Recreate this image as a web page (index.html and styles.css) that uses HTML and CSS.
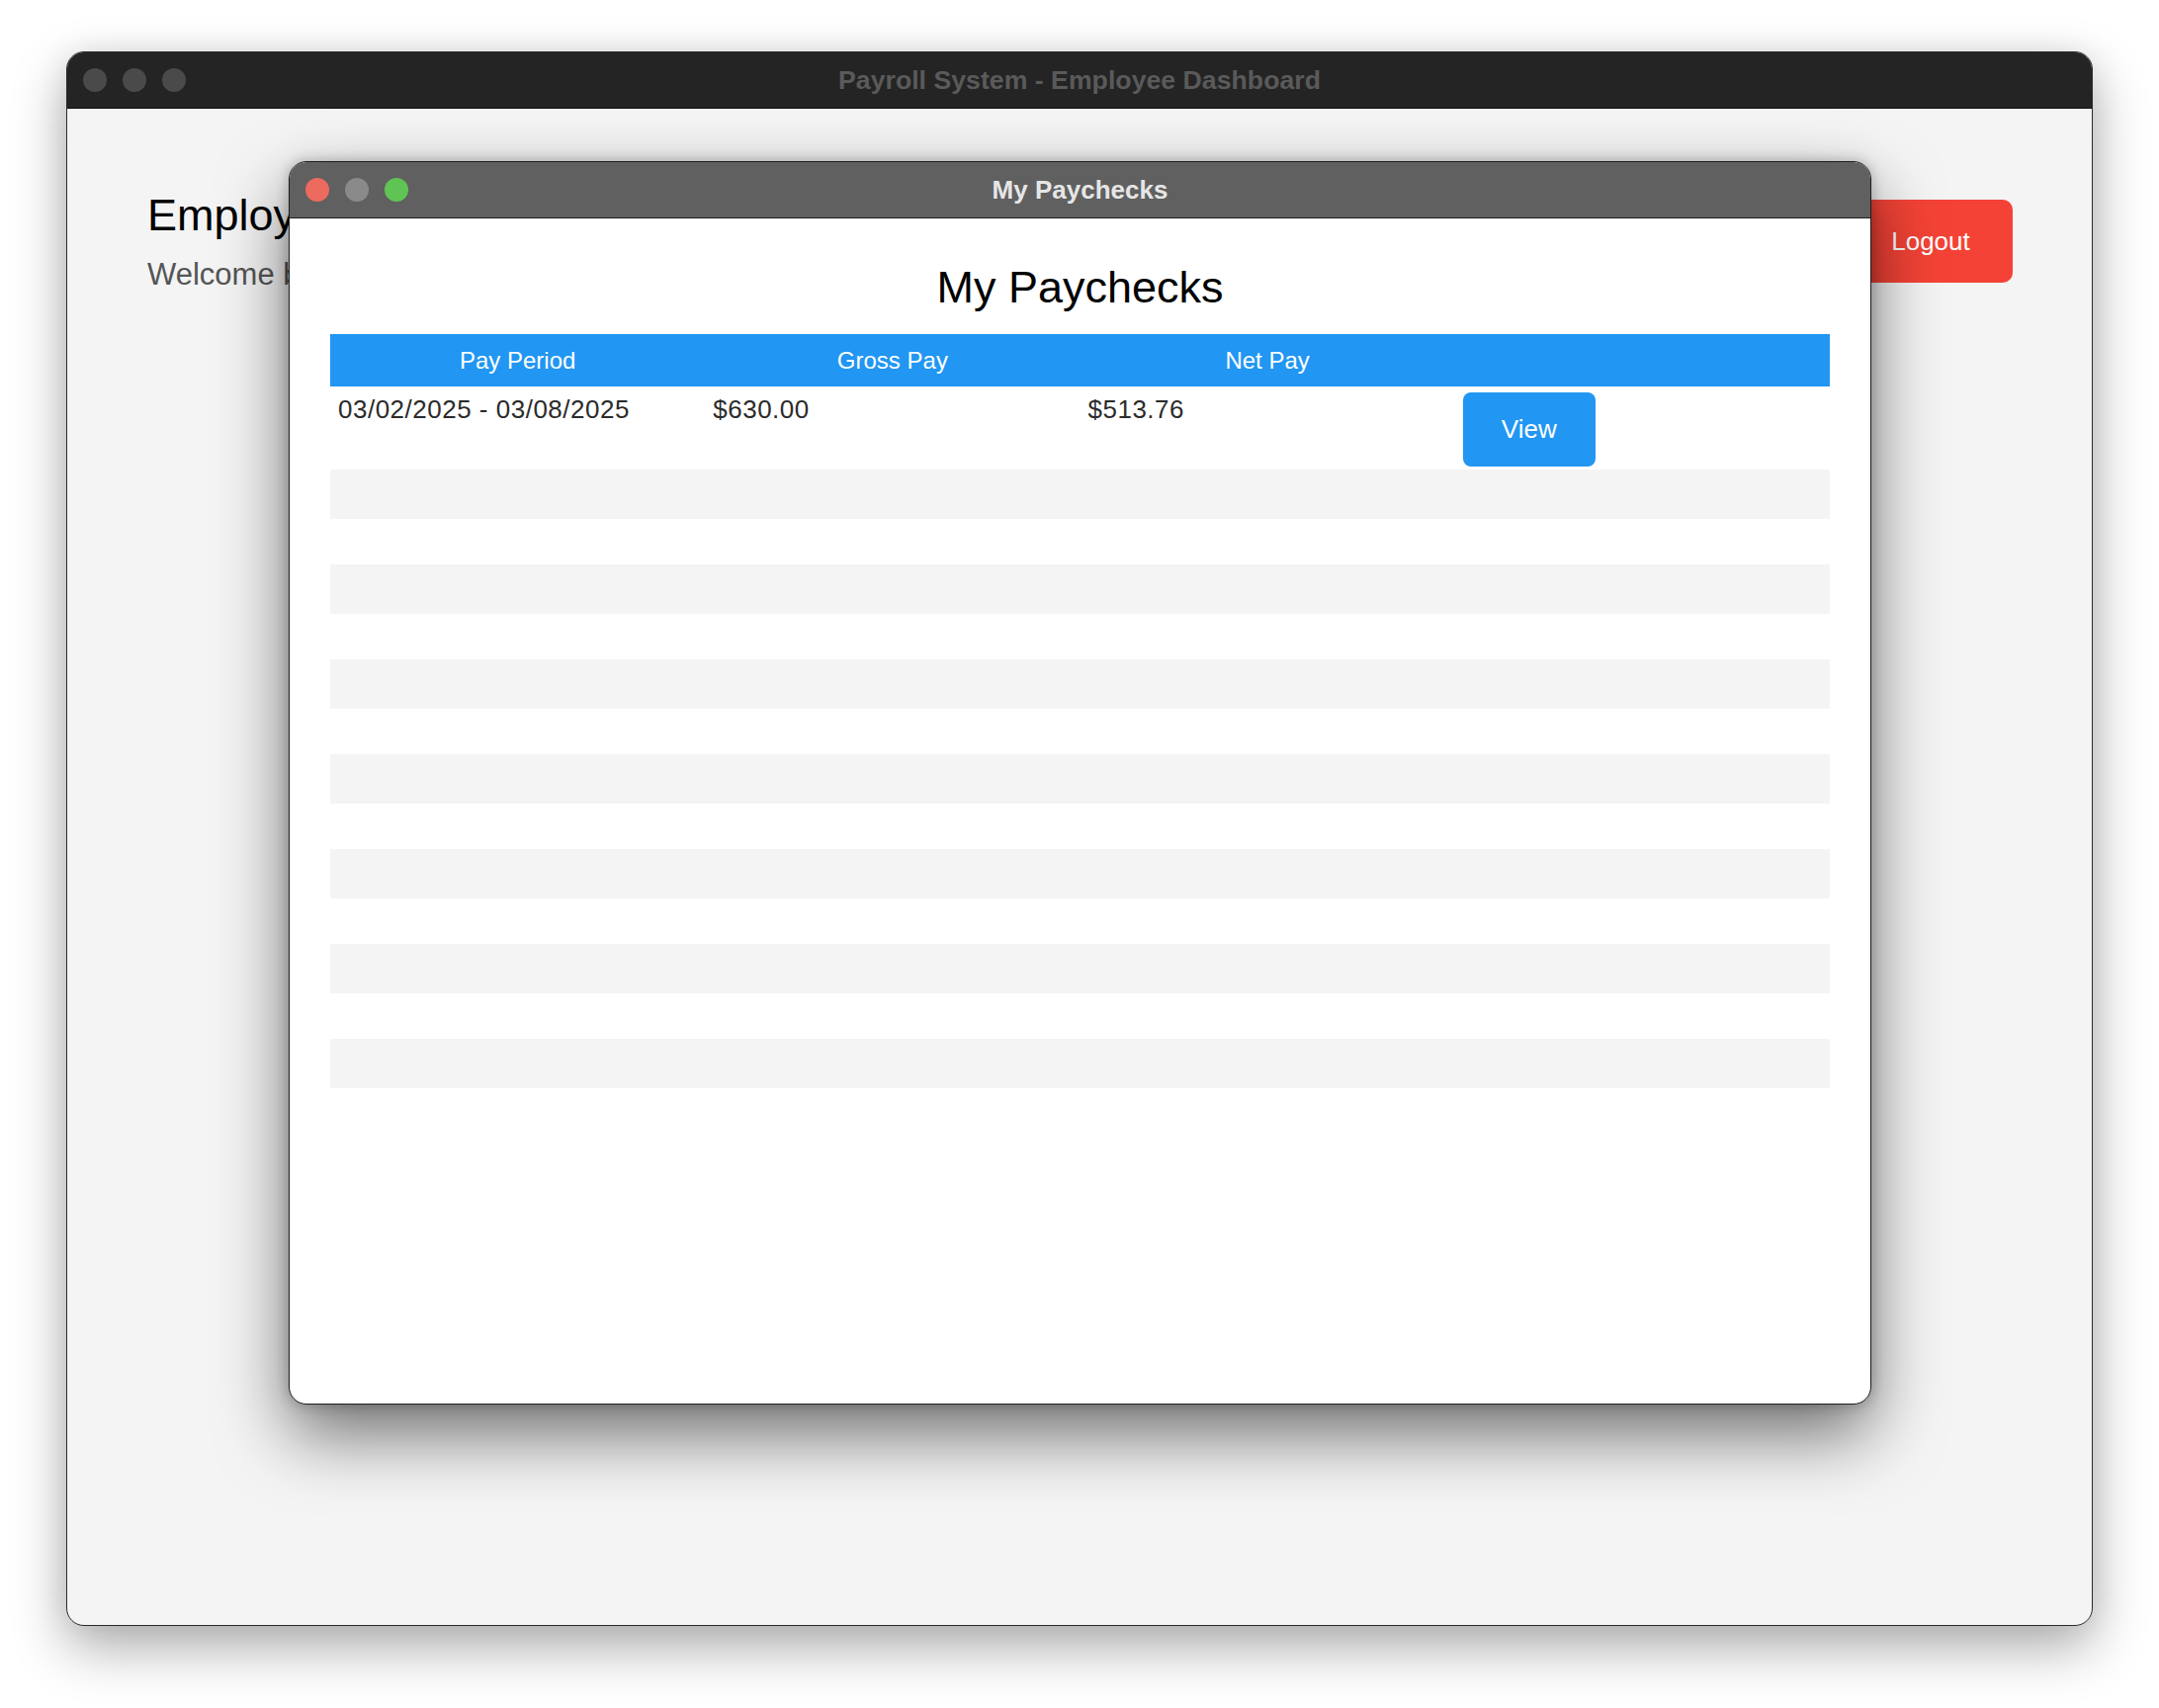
FILE: index.html
```html
<!DOCTYPE html>
<html lang="en">
<head>
<meta charset="utf-8">
<title>Payroll System - Employee Dashboard</title>
<link rel="stylesheet" href="styles.css">
</head>
<body>
<div class="window">
  <div class="titlebar">
    <div class="lights">
      <span class="light dim"></span>
      <span class="light dim"></span>
      <span class="light dim"></span>
    </div>
    <div class="title">Payroll System - Employee Dashboard</div>
    <div></div>
  </div>
  <div class="content">
    <header class="dash-header">
      <div class="greeting">
        <h1>Employee Dashboard</h1>
        <p>Welcome back, John Smith</p>
      </div>
      <button class="logout">Logout</button>
    </header>
  </div>

  <div class="modal">
    <div class="titlebar modal-bar">
      <div class="lights">
        <span class="light red"></span>
        <span class="light gray"></span>
        <span class="light green"></span>
      </div>
      <div class="title">My Paychecks</div>
      <div></div>
    </div>
    <div class="modal-body">
      <h2>My Paychecks</h2>
      <table class="paychecks">
        <thead>
          <tr>
            <th>Pay Period</th>
            <th>Gross Pay</th>
            <th>Net Pay</th>
            <th></th>
          </tr>
        </thead>
        <tbody>
          <tr class="data">
            <td>03/02/2025 - 03/08/2025</td>
            <td>$630.00</td>
            <td>$513.76</td>
            <td><button class="view">View</button></td>
          </tr>
          <tr class="blank"><td></td><td></td><td></td><td></td></tr>
          <tr class="blank"><td></td><td></td><td></td><td></td></tr>
          <tr class="blank"><td></td><td></td><td></td><td></td></tr>
          <tr class="blank"><td></td><td></td><td></td><td></td></tr>
          <tr class="blank"><td></td><td></td><td></td><td></td></tr>
          <tr class="blank"><td></td><td></td><td></td><td></td></tr>
          <tr class="blank"><td></td><td></td><td></td><td></td></tr>
          <tr class="blank"><td></td><td></td><td></td><td></td></tr>
          <tr class="blank"><td></td><td></td><td></td><td></td></tr>
          <tr class="blank"><td></td><td></td><td></td><td></td></tr>
          <tr class="blank"><td></td><td></td><td></td><td></td></tr>
          <tr class="blank"><td></td><td></td><td></td><td></td></tr>
          <tr class="blank"><td></td><td></td><td></td><td></td></tr>
        </tbody>
      </table>
    </div>
  </div>
</div>
</body>
</html>
```

FILE: styles.css
```css
* {
  box-sizing: border-box;
}

html, body {
  margin: 0;
  background: #ffffff;
}

body {
  min-height: 1728px;
  padding: 52px 67px 83px;
  font-family: "Liberation Sans", Arial, sans-serif;
}

.window {
  position: relative;
  height: 1593px;
  background: #f4f4f4;
  border: 1px solid #2a2a2a;
  border-radius: 18px;
  box-shadow: 0 22px 55px rgba(0, 0, 0, 0.32), 0 0 30px rgba(0, 0, 0, 0.08);
  overflow: visible;
}

.titlebar {
  display: grid;
  grid-template-columns: 1fr auto 1fr;
  align-items: center;
  height: 57px;
  padding: 0 16px;
  background: #242424;
  border-bottom: 1px solid #111111;
  border-radius: 17px 17px 0 0;
}

.lights {
  display: flex;
  gap: 16px;
}

.light {
  width: 24px;
  height: 24px;
  border-radius: 50%;
  display: block;
}

.light.dim { background: #4a4a4a; }
.light.red { background: #ed6a5e; }
.light.gray { background: #8a8a8a; }
.light.green { background: #5fc454; }

.title {
  font-size: 26.7px;
  font-weight: bold;
  color: #5a5a5a;
  white-space: nowrap;
}

.content {
  padding: 82px 80px 0 81px;
}

.dash-header {
  display: flex;
  justify-content: space-between;
  align-items: center;
}

.greeting h1 {
  margin: 0 0 15px;
  font-size: 45px;
  line-height: 52px;
  font-weight: normal;
  color: #000000;
}

.greeting p {
  margin: 0;
  font-size: 31px;
  line-height: 37px;
  color: #555555;
}

.logout {
  width: 166px;
  height: 84px;
  padding: 0;
  border: none;
  border-radius: 10px;
  background: #f44336;
  color: #ffffff;
  font-family: "Liberation Sans", Arial, sans-serif;
  font-size: 26px;
}

.modal {
  position: absolute;
  left: 224px;
  top: 110px;
  width: 1601px;
  height: 1258px;
  background: #ffffff;
  border: 1px solid #1e1e1e;
  border-radius: 18px;
  box-shadow: 0 30px 70px rgba(0, 0, 0, 0.55), 0 0 14px rgba(0, 0, 0, 0.25);
}

.modal-bar {
  background: #606060;
  border-bottom: 1px solid #1e1e1e;
}

.modal-bar .title {
  font-size: 26px;
  color: #e6e6e6;
}

.modal-body {
  padding: 44px 41px 0;
}

.modal-body h2 {
  margin: 0 0 21px;
  text-align: center;
  font-size: 45px;
  line-height: 52px;
  font-weight: normal;
  color: #000000;
}

.paychecks {
  width: 100%;
  border-collapse: collapse;
  table-layout: fixed;
}

.paychecks th {
  height: 53px;
  padding: 0;
  background: #2196f3;
  color: #ffffff;
  font-size: 24px;
  font-weight: normal;
  text-align: center;
}

.paychecks td {
  padding: 6px 8px 3px;
  vertical-align: top;
  font-size: 26px;
  line-height: 34px;
  letter-spacing: 0.5px;
  color: #2b2b2b;
  text-align: left;
}

.paychecks tbody tr:nth-child(even) {
  background: #f4f4f4;
}

.paychecks tr.blank td {
  padding: 0;
}

.paychecks tr.blank:nth-child(even) {
  height: 50px;
}

.paychecks tr.blank:nth-child(odd) {
  height: 46px;
}

.view {
  display: block;
  width: 134px;
  height: 75px;
  padding: 0;
  border: none;
  border-radius: 8px;
  background: #2196f3;
  color: #ffffff;
  font-family: "Liberation Sans", Arial, sans-serif;
  font-size: 26px;
  letter-spacing: 0;
}
```
